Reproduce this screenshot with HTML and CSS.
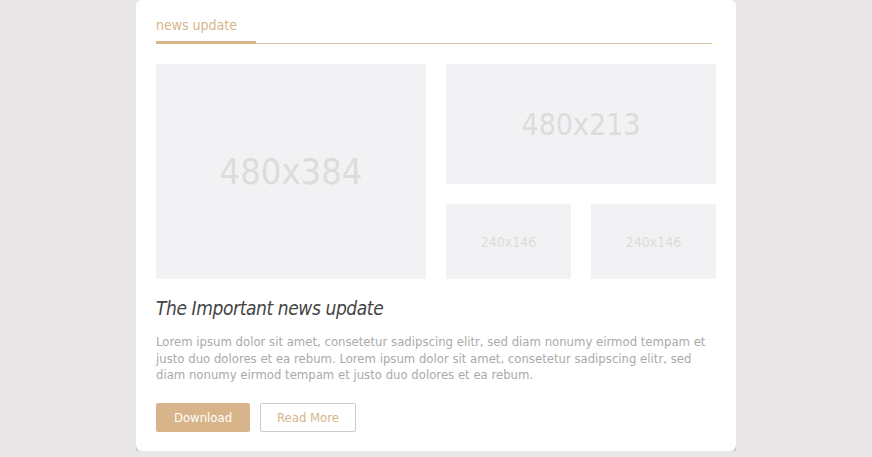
FILE: index.html
```html
<!DOCTYPE html>
<html lang="en">
<head>
    <meta charset="UTF-8">
    <meta name="viewport" content="width=device-width, initial-scale=1.0">
    <title>News Update</title>
    <link rel="stylesheet" href="styles.css">
</head>
<body>
    <div class="card">
        <div class="card-header">
            <span class="card-tab">news update</span>
        </div>

        <div class="gallery">
            <div class="placeholder big">480x384</div>
            <div class="gallery-side">
                <div class="placeholder wide">480x213</div>
                <div class="gallery-row">
                    <div class="placeholder small">240x146</div>
                    <div class="placeholder small">240x146</div>
                </div>
            </div>
        </div>

        <h2 class="news-title">The Important news update</h2>
        <p class="news-text">Lorem ipsum dolor sit amet, consetetur sadipscing elitr, sed diam nonumy eirmod tempam et justo duo dolores et ea rebum. Lorem ipsum dolor sit amet, consetetur sadipscing elitr, sed diam nonumy eirmod tempam et justo duo dolores et ea rebum.</p>

        <div class="actions">
            <button class="btn btn-primary">Download</button>
            <button class="btn btn-outline">Read More</button>
        </div>
    </div>
</body>
</html>
```

FILE: styles.css
```css
body {
    font-family: 'DejaVu Sans Condensed', 'DejaVu Sans', sans-serif;
    background-color: #e9e7e7;
    margin: 0;
    padding: 0;
}

.card {
    width: 600px;
    box-sizing: border-box;
    margin: 0 auto;
    padding: 15px 20px 19px;
    background-color: #ffffff;
    border-radius: 6px;
    box-shadow: 0 4px 0 #cccccc;
}

.card-header {
    width: 556px;
    border-bottom: 1px solid #d8c2a6;
    margin-bottom: 20px;
}

.card-tab {
    display: inline-block;
    width: 100px;
    padding-bottom: 6px;
    border-bottom: 3px solid #d7b48a;
    margin-bottom: -1px;
    color: #d7b48a;
    font-size: 14px;
    line-height: 20px;
    vertical-align: top;
}

.gallery {
    display: flex;
    gap: 20px;
    height: 215px;
}

.placeholder {
    display: flex;
    align-items: center;
    justify-content: center;
    background-color: #f2f2f4;
    color: #dcdcdc;
}

.big {
    width: 270px;
    font-size: 36px;
}

.gallery-side {
    display: flex;
    flex-direction: column;
    gap: 20px;
    width: 270px;
}

.wide {
    height: 120px;
    font-size: 30px;
}

.gallery-row {
    display: flex;
    justify-content: space-between;
    flex: 1;
}

.small {
    width: 125px;
    font-size: 14px;
}

.news-title {
    margin: 16px 0 0;
    font-size: 19px;
    letter-spacing: -0.4px;
    font-weight: normal;
    font-style: italic;
    color: #444444;
    line-height: 26px;
}

.news-text {
    margin: 13px 0 0;
    font-size: 13px;
    line-height: 16.5px;
    color: #aaaaaa;
}

.actions {
    display: flex;
    gap: 10px;
    margin-top: 19px;
}

.btn {
    font-family: inherit;
    font-size: 13px;
    height: 29px;
    border-radius: 2px;
    cursor: pointer;
}

.btn-primary {
    width: 94px;
    background-color: #d7b48a;
    border: none;
    color: #ffffff;
}

.btn-outline {
    width: 96px;
    background-color: #ffffff;
    border: 1px solid #cccccc;
    color: #d7b48a;
}
```
